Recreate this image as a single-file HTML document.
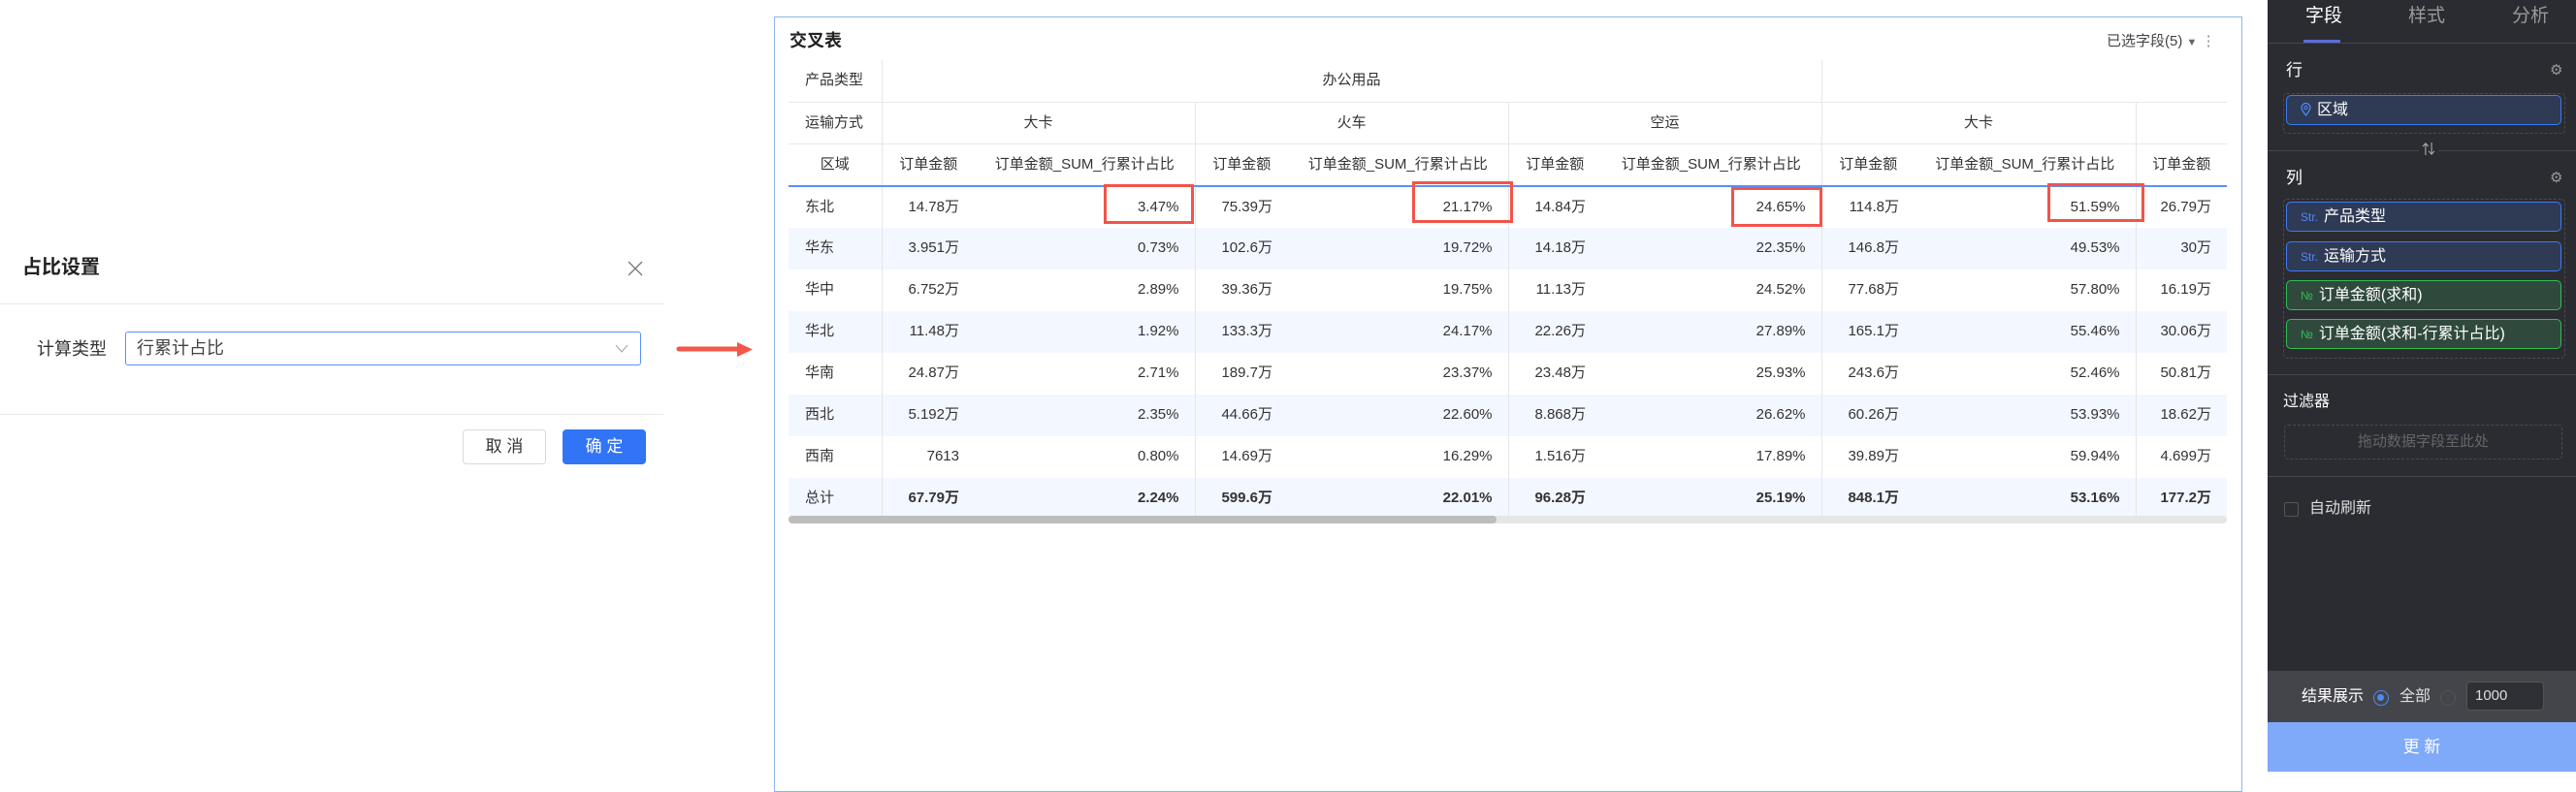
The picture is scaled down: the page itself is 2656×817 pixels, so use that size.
<!DOCTYPE html>
<html><head><meta charset="utf-8"><style>
*{margin:0;padding:0;box-sizing:border-box}
body{width:2656px;height:796px;position:relative;background:#fff;font-family:"Liberation Sans","Noto Sans CJK SC",sans-serif;color:#333;overflow:hidden;line-height:1.2}
.a{position:absolute}
table{position:absolute;left:813px;top:62px;border-collapse:collapse;table-layout:fixed;font-size:15px}
td{height:43px;line-height:42px;white-space:nowrap;overflow:hidden;padding:0 16px;vertical-align:middle}
.h td{text-align:center;border-bottom:1px solid #e8e8e8}
.h3 td{border-bottom:2px solid #5b8ff9}
td.g{border-left:1px solid #e6e6e6}
.d td{text-align:right}
.d td:first-child{text-align:left;padding-left:17px}
.s td{background:#f3f7ff}
.b td{font-weight:bold}
.pill{position:absolute;left:2357px;width:284px;height:31px;border-radius:5px;font-size:16px;color:#fff;line-height:29px;padding-left:14px}
.bl{border:1.5px solid #3d7bf5;background:#2f3a55}
.gr{border:1.5px solid #2fbf55;background:#2f4a3c}
.pill i{font-style:normal;font-size:12px;margin-right:6px}
.rb{position:absolute;border:3px solid #f2544a}
</style></head><body>
<!-- dialog -->
<div class="a" style="left:23px;top:264px;font-size:20px;font-weight:bold;color:#222">占比设置</div>
<svg class="a" style="left:647px;top:269px" width="16" height="16"><path d="M1 1L15 15M15 1L1 15" stroke="#777" stroke-width="1.3"/></svg>
<div class="a" style="left:0;top:313px;width:684px;height:1px;background:#e8e8e8"></div>
<div class="a" style="left:38px;top:348px;font-size:18px;color:#333;line-height:24px">计算类型</div>
<div class="a" style="left:129px;top:342px;width:532px;height:35px;border:1px solid #5b8ff9;border-radius:3px;font-size:18px;color:#444;line-height:33px;padding-left:11px">行累计占比</div>
<svg class="a" style="left:634px;top:355px" width="14" height="9"><path d="M1 1L7 8L13 1" stroke="#aaa" fill="none" stroke-width="1.2"/></svg>
<div class="a" style="left:0;top:427px;width:684px;height:1px;background:#e8e8e8"></div>
<div class="a" style="left:477px;top:443px;width:86px;height:36px;border:1px solid #d9d9d9;border-radius:4px;font-size:17px;text-align:center;line-height:34px;color:#333">取 消</div>
<div class="a" style="left:580px;top:443px;width:86px;height:36px;background:#3274f6;border-radius:4px;font-size:17px;text-align:center;line-height:36px;color:#fff">确 定</div>
<svg class="a" style="left:696px;top:350px" width="84" height="22"><path d="M4 10H66" stroke="#f2574a" stroke-width="5" stroke-linecap="round"/><path d="M64 3L80 10.5L64 18Z" fill="#f2574a"/></svg>
<!-- panel -->
<div class="a" style="left:798px;top:17px;width:1514px;height:800px;border:1.5px solid #8cb4f2"></div>
<div class="a" style="left:814px;top:32px;font-size:18px;font-weight:bold;color:#222">交叉表</div>
<div class="a" style="left:2172px;top:34px;font-size:15px;color:#444">已选字段(5) <span style="font-size:11px;color:#666">▼</span> <span style="color:#888">⋮</span></div>
<table>
<colgroup><col style="width:96px"><col style="width:96px"><col style="width:227px"><col style="width:96px"><col style="width:227px"><col style="width:96px"><col style="width:227px"><col style="width:96px"><col style="width:228px"><col style="width:94px"></colgroup>
<tr class="h"><td style="text-align:left;padding-left:17px">产品类型</td><td class="g" colspan="6">办公用品</td><td class="g" colspan="3"></td></tr>
<tr class="h"><td style="text-align:left;padding-left:17px">运输方式</td><td class="g" colspan="2">大卡</td><td class="g" colspan="2">火车</td><td class="g" colspan="2">空运</td><td class="g" colspan="2">大卡</td><td class="g"></td></tr>
<tr class="h h3"><td>区域</td><td class="g" style="padding:0">订单金额</td><td style="padding:0 8px">订单金额_SUM_行累计占比</td><td class="g" style="padding:0">订单金额</td><td style="padding:0 8px">订单金额_SUM_行累计占比</td><td class="g" style="padding:0">订单金额</td><td style="padding:0 8px">订单金额_SUM_行累计占比</td><td class="g" style="padding:0">订单金额</td><td style="padding:0 8px">订单金额_SUM_行累计占比</td><td class="g" style="padding:0">订单金额</td></tr>
<tr class="d"><td>东北</td><td class="g">14.78万</td><td>3.47%</td><td class="g">75.39万</td><td>21.17%</td><td class="g">14.84万</td><td>24.65%</td><td class="g">114.8万</td><td>51.59%</td><td class="g">26.79万</td></tr>
<tr class="d s"><td>华东</td><td class="g">3.951万</td><td>0.73%</td><td class="g">102.6万</td><td>19.72%</td><td class="g">14.18万</td><td>22.35%</td><td class="g">146.8万</td><td>49.53%</td><td class="g">30万</td></tr>
<tr class="d"><td>华中</td><td class="g">6.752万</td><td>2.89%</td><td class="g">39.36万</td><td>19.75%</td><td class="g">11.13万</td><td>24.52%</td><td class="g">77.68万</td><td>57.80%</td><td class="g">16.19万</td></tr>
<tr class="d s"><td>华北</td><td class="g">11.48万</td><td>1.92%</td><td class="g">133.3万</td><td>24.17%</td><td class="g">22.26万</td><td>27.89%</td><td class="g">165.1万</td><td>55.46%</td><td class="g">30.06万</td></tr>
<tr class="d"><td>华南</td><td class="g">24.87万</td><td>2.71%</td><td class="g">189.7万</td><td>23.37%</td><td class="g">23.48万</td><td>25.93%</td><td class="g">243.6万</td><td>52.46%</td><td class="g">50.81万</td></tr>
<tr class="d s"><td>西北</td><td class="g">5.192万</td><td>2.35%</td><td class="g">44.66万</td><td>22.60%</td><td class="g">8.868万</td><td>26.62%</td><td class="g">60.26万</td><td>53.93%</td><td class="g">18.62万</td></tr>
<tr class="d"><td>西南</td><td class="g">7613</td><td>0.80%</td><td class="g">14.69万</td><td>16.29%</td><td class="g">1.516万</td><td>17.89%</td><td class="g">39.89万</td><td>59.94%</td><td class="g">4.699万</td></tr>
<tr class="d s b"><td style="font-weight:normal">总计</td><td class="g">67.79万</td><td>2.24%</td><td class="g">599.6万</td><td>22.01%</td><td class="g">96.28万</td><td>25.19%</td><td class="g">848.1万</td><td>53.16%</td><td class="g">177.2万</td></tr>
</table>
<div class="a" style="left:813px;top:532px;width:1483px;height:8px;background:#e6e6e6;border-radius:4px"></div>
<div class="a" style="left:813px;top:532px;width:730px;height:8px;background:#bdbdbd;border-radius:4px"></div>
<div class="rb" style="left:1138px;top:190px;width:93px;height:41px"></div>
<div class="rb" style="left:1456px;top:187px;width:104px;height:43px"></div>
<div class="rb" style="left:1785px;top:193px;width:94px;height:41px"></div>
<div class="rb" style="left:2111px;top:189px;width:100px;height:40px"></div>
<!-- right sidebar -->
<div class="a" style="left:2338px;top:0;width:318px;height:796px;background:#2b2c31"></div>
<div class="a" style="left:2338px;top:44px;width:318px;height:1px;background:#45464c"></div>
<div class="a" style="left:2377px;top:6px;font-size:19px;color:#fff">字段</div>
<div class="a" style="left:2483px;top:6px;font-size:19px;color:#999">样式</div>
<div class="a" style="left:2590px;top:6px;font-size:19px;color:#999">分析</div>
<div class="a" style="left:2375px;top:41px;width:38px;height:3px;background:#5b6fd6"></div>
<div class="a" style="left:2357px;top:63px;font-size:17px;color:#fff">行</div>
<div class="a" style="left:2629px;top:64px;font-size:15px;color:#999">⚙</div>
<div class="a" style="left:2354px;top:96px;width:291px;height:42px;border:1px dashed #4a4b52;border-radius:4px"></div>
<div class="pill bl" style="top:98px"><svg width="11" height="14" style="margin-right:6px;vertical-align:-2px"><path d="M5.5 13C2 8.5 1 6.5 1 5a4.5 4.5 0 0 1 9 0c0 1.5-1 3.5-4.5 8z" fill="none" stroke="#4d8af5" stroke-width="1.3"/><circle cx="5.5" cy="5" r="1.6" fill="none" stroke="#4d8af5"/></svg>区域</div>
<div class="a" style="left:2338px;top:155px;width:318px;height:1px;background:#45464c"></div>
<div class="a" style="left:2494px;top:146px;font-size:14px;color:#bbb;background:#2b2c31;padding:0 3px">⇅</div>
<div class="a" style="left:2357px;top:174px;font-size:17px;color:#fff">列</div>
<div class="a" style="left:2629px;top:175px;font-size:15px;color:#999">⚙</div>
<div class="a" style="left:2354px;top:205px;width:291px;height:165px;border:1px dashed #4a4b52;border-radius:4px"></div>
<div class="pill bl" style="top:208px"><i style="color:#4d8af5">Str.</i>产品类型</div>
<div class="pill bl" style="top:249px"><i style="color:#4d8af5">Str.</i>运输方式</div>
<div class="pill gr" style="top:289px"><i style="color:#2fbf55">№</i>订单金额(求和)</div>
<div class="pill gr" style="top:329px"><i style="color:#2fbf55">№</i>订单金额(求和-行累计占比)</div>
<div class="a" style="left:2338px;top:386px;width:318px;height:1px;background:#45464c"></div>
<div class="a" style="left:2354px;top:405px;font-size:16px;color:#fff">过滤器</div>
<div class="a" style="left:2355px;top:438px;width:287px;height:36px;border:1px dashed #4a4b52;border-radius:4px;font-size:15px;color:#666;text-align:center;line-height:34px">拖动数据字段至此处</div>
<div class="a" style="left:2338px;top:491px;width:318px;height:1px;background:#45464c"></div>
<div class="a" style="left:2355px;top:518px;width:15px;height:15px;border:1px solid #555;border-radius:2px"></div>
<div class="a" style="left:2381px;top:514px;font-size:16px;color:#ddd;line-height:22px">自动刷新</div>
<div class="a" style="left:2338px;top:692px;width:318px;height:53px;background:#44454b"></div>
<div class="a" style="left:2373px;top:708px;font-size:16px;color:#fff;line-height:22px">结果展示</div>
<div class="a" style="left:2447px;top:712px;width:16px;height:16px;border:1.5px solid #4d8af5;border-radius:50%"><div style="margin:3px;width:7px;height:7px;border-radius:50%;background:#4d8af5"></div></div>
<div class="a" style="left:2474px;top:708px;font-size:16px;color:#ddd;line-height:22px">全部</div>
<div class="a" style="left:2516px;top:712px;width:16px;height:16px;border:1.5px solid #555;border-radius:50%"></div>
<div class="a" style="left:2543px;top:703px;width:80px;height:30px;border:1px solid #555;border-radius:4px;background:#2f3035;font-size:15px;color:#ddd;line-height:28px;padding-left:8px">1000</div>
<div class="a" style="left:2338px;top:745px;width:318px;height:51px;background:#7eaaf9;font-size:17px;color:#fff;text-align:center;line-height:51px">更 新</div>
</body></html>
